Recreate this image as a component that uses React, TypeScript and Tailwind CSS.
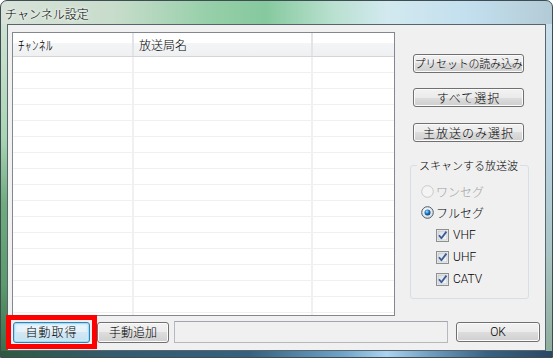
import React from 'react'

const jp = { fontFamily: '"Noto Sans CJK JP", "Noto Sans", sans-serif' }
const latin = { fontFamily: 'Roboto, "Liberation Sans", "Noto Sans CJK JP", sans-serif' }

function Button({ label, className = '', focused = false, font = jp }: { label: string; className?: string; focused?: boolean; font?: React.CSSProperties }) {
  const skin = focused
    ? 'border-[#3c7fb1] bg-[linear-gradient(#eef7fc_0%,#e3f1f9_50%,#d3e8f4_50%,#c6e0ef_100%)] shadow-[inset_0_0_0_1px_#9fdcf8,inset_0_0_2px_2px_#c9ecfb]'
    : 'border-[#707070] bg-[linear-gradient(#f2f2f2_0%,#ebebeb_50%,#dddddd_50%,#cfcfcf_100%)] shadow-[inset_0_0_0_1px_#fbfbfb]'
  return (
    <div
      className={`flex items-center justify-center rounded-[3px] border text-[12px] leading-none text-black ${skin} ${className}`}
      style={font}
    >
      {label}
    </div>
  )
}

function Radio({ checked, disabled, label }: { checked?: boolean; disabled?: boolean; label: string }) {
  return (
    <div className="flex h-[21px] items-center gap-[2px] pl-[10px]">
      <svg width="13" height="13" viewBox="0 0 13 13">
        <defs>
          <radialGradient id="rbg" cx="40%" cy="35%" r="70%">
            <stop offset="0%" stopColor="#ffffff" />
            <stop offset="100%" stopColor="#d6d9dc" />
          </radialGradient>
          <radialGradient id="rdot" cx="40%" cy="35%" r="65%">
            <stop offset="0%" stopColor="#9fe0ff" />
            <stop offset="55%" stopColor="#1b78c8" />
            <stop offset="100%" stopColor="#0c3f7a" />
          </radialGradient>
        </defs>
        {disabled ? (
          <circle cx="6.5" cy="6.5" r="5.8" fill="#f4f4f4" stroke="#c9c9c9" strokeWidth="1" />
        ) : (
          <>
            <circle cx="6.5" cy="6.5" r="5.8" fill="url(#rbg)" stroke="#4f5a66" strokeWidth="1" />
            {checked && <circle cx="6.5" cy="6.5" r="3" fill="url(#rdot)" />}
          </>
        )}
      </svg>
      <span className={`text-[12px] leading-none ${disabled ? 'text-[#a0a0a0]' : 'text-black'}`} style={jp}>
        {label}
      </span>
    </div>
  )
}

function Check({ label }: { label: string }) {
  return (
    <div className="flex h-[22px] items-center gap-[4px] pl-[25px]">
      <svg width="13" height="13" viewBox="0 0 13 13">
        <defs>
          <linearGradient id="cbg" x1="0" y1="0" x2="1" y2="1">
            <stop offset="0%" stopColor="#d8dde3" />
            <stop offset="100%" stopColor="#f6f7f8" />
          </linearGradient>
        </defs>
        <rect x="0.5" y="0.5" width="12" height="12" fill="#f4f4f4" stroke="#8e8f8f" />
        <rect x="2" y="2" width="9" height="9" fill="url(#cbg)" stroke="#b3b8bd" strokeWidth="0.6" />
        <path d="M3 6.2 L5.4 9.2 L10.4 2.6" fill="none" stroke="#3b5a98" strokeWidth="1.8" strokeLinejoin="round" />
      </svg>
      <span className="text-[12px] leading-none text-black" style={latin}>
        {label}
      </span>
    </div>
  )
}

export default function App() {
  const rows = Array.from({ length: 17 })

  return (
    <div className="flex h-[358px] w-[553px] flex-col overflow-hidden rounded-t-[7px] border border-[#3d4d52] bg-[linear-gradient(to_right,#d8e2d9_0%,#c9ddcc_20%,#96cfa9_38%,#86c99e_48%,#b8e0cf_60%,#d2e9ef_70%,#c3dfee_85%,#b3cbd6_100%)] font-light">
      {/* title */}
      <div className="flex h-[23px] items-center pl-[4px] pt-[3px]">
        <span className="text-[12px] leading-none text-black [text-shadow:0_0_5px_#ffffff,0_0_3px_#ffffff]" style={jp}>
          チャンネル設定
        </span>
      </div>

      <div className="flex flex-1">
        <div className="w-[6px] bg-[linear-gradient(#cfe2d3_0%,#a9d4b4_35%,#6fab7e_55%,#5b9a6a_80%,#3d6e4c_100%)]" />

        {/* client area */}
        <div className="flex flex-1 flex-col border border-[#56666c] bg-[#f0f0f0]">
          <div className="flex pl-[4px] pt-[7px]">
            {/* list view */}
            <div className="h-[284px] w-[383px] overflow-hidden border border-[#828790] bg-white">
              <div
                className="grid h-[24px] grid-cols-[121px_179px_1fr] border-b border-[#d5d5d5] bg-[linear-gradient(#ffffff_0%,#ffffff_45%,#f4f5f7_45%,#eff0f2_100%)] text-[12px] leading-none text-black"
                style={jp}
              >
                <div className="flex items-center border-r-2 border-[#e3e4e7] pl-[5px] text-[13px] tracking-[0.5px]">ﾁｬﾝﾈﾙ</div>
                <div className="flex items-center border-r-2 border-[#e3e4e7] pl-[5px]">放送局名</div>
                <div />
              </div>
              {rows.map((_, i) => (
                <div key={i} className="grid h-[16px] grid-cols-[121px_179px_1fr] border-b border-[#f0f0f0]">
                  <div className="border-r-2 border-[#f0f0f0]" />
                  <div className="border-r-2 border-[#f0f0f0]" />
                  <div />
                </div>
              ))}
            </div>

            {/* right column */}
            <div className="ml-[15px] flex w-[119px] flex-col pt-[22px]">
              <Button label="プリセットの読み込み" className="ml-[3px] h-[19px] w-[111px] !text-[11px] tracking-[-0.2px]" />
              <Button label="すべて選択" className="ml-[3px] mt-[15px] h-[19px] w-[111px] tracking-[1px]" />
              <Button label="主放送のみ選択" className="ml-[3px] mt-[16px] h-[19px] w-[111px] tracking-[1px]" />

              <fieldset className="mt-[16px] h-[141px] rounded-[3px] border border-[#d5dfe5]">
                <legend className="ml-[6px] px-[2px] text-[11px] leading-[14px] text-black" style={jp}>
                  スキャンする放送波
                </legend>
                <div className="pt-[9px]">
                  <Radio label="ワンセグ" disabled />
                  <Radio label="フルセグ" checked />
                  <div className="mt-[1px]">
                    <Check label="VHF" />
                    <Check label="UHF" />
                    <Check label="CATV" />
                  </div>
                </div>
              </fieldset>
            </div>
          </div>

          {/* bottom row */}
          <div className="mt-[5px] flex items-center pl-[5px]">
            <div className="relative">
              <Button label="自動取得" focused className="h-[21px] w-[77px] tracking-[1px]" />
              <div className="pointer-events-none absolute -bottom-[6px] -left-[7px] -right-[7px] -top-[7px] border-[5px] border-[#ff0000]" />
            </div>
            <Button label="手動追加" className="ml-[7px] h-[21px] w-[72px]" />
            <div className="ml-[5px] h-[22px] w-[274px] border border-[#b5b8bd] border-t-[#a3a6ab] bg-[#f0f0f0]" />
            <Button label="OK" font={latin} className="ml-[8px] h-[20px] w-[84px]" />
          </div>
        </div>

        <div className="w-[6px] bg-[linear-gradient(#c9e0ec_0%,#b8d3e0_40%,#a9c4c4_70%,#8fae9c_100%)]" />
      </div>

      <div className="h-[6px] bg-[linear-gradient(to_right,#2f5a40_0%,#345a6e_20%,#36607f_45%,#6fa3c8_62%,#acd3f0_70%,#6f9dc0_78%,#3a6283_88%,#2a4763_100%)]" />
    </div>
  )
}
